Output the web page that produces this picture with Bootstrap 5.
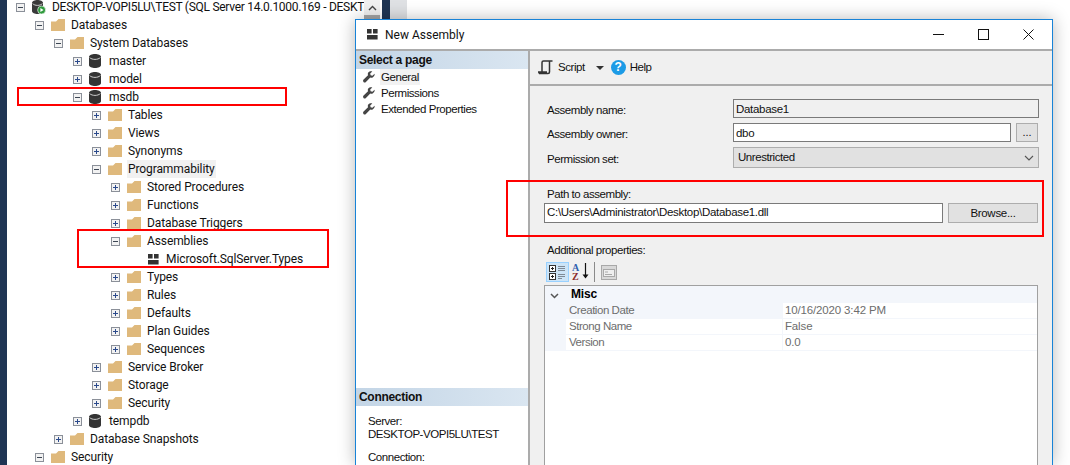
<!DOCTYPE html>
<html lang="en">
<head>
<meta charset="utf-8">
<title>New Assembly</title>
<link href="https://cdn.jsdelivr.net/npm/bootstrap@5.3.0/dist/css/bootstrap.min.css" rel="stylesheet">
<style>
html,body{height:465px;overflow:hidden;background:#fff}
body{font-family:Roboto,sans-serif;color:#111;position:relative}
.navy-edge{width:7px;background:#1f3554}
.obj-tree{width:357px;height:467px;margin-top:-2px;font-size:12px;letter-spacing:-.1px;list-style:none;padding:0;margin-bottom:0;white-space:nowrap;overflow:hidden}
.tnode{height:18px;display:flex;align-items:center;line-height:18px}
.tnode .exp{width:9px;height:9px;margin-right:7px;flex:none}
.tnode .ico{width:14px;height:14px;margin-right:6px;flex:none}
.lv0{padding-left:9px;letter-spacing:-.28px}.lv1{padding-left:28px}.lv2{padding-left:47px}.lv3{padding-left:66px}.lv4{padding-left:85px}.lv5{padding-left:104px}
.leaf{padding-left:141px}
.leaf .ico{width:11px;height:11px;margin-right:7px}
.hilite{background:#f1f1f1;padding:0 1px;margin-left:-1px}
.sb-col{width:16px;background:#f0f0f0;color:#444}
.sb-btn{height:15px}
.sb-thumb{height:60px;background:#a6a6a6}
.navy-col{width:8px;background:#1f3554;margin-left:2px}
.pale-col{width:17px;background:#dfe1e4}
.redbox{position:absolute;border:2px solid #f00;z-index:5;pointer-events:none}
.rb1{left:17px;top:87px;width:270px;height:19px}
.rb2{left:77px;top:229px;width:252px;height:39px}
.rb3{left:506px;top:180px;width:538px;height:57px}
.dlg{position:absolute;left:355px;top:19px;width:698px;height:446px;background:#fff;border:1px solid #1883d7;border-bottom:0;box-shadow:0 0 16px rgba(0,0,0,.28);z-index:3;font-family:"Liberation Sans",sans-serif;font-size:11.5px;letter-spacing:-.45px;color:#111}
.dlg-title{height:31px;border-bottom:2px solid #ababab;padding-left:11px;padding-right:1px}
.dlg-title .ttl{font-family:Roboto,sans-serif;font-size:12px;margin-left:7px;padding-top:1px;letter-spacing:0}
.winbtn{width:45px;height:14px}
.dlg-body{min-height:0}
.pane-l{width:174px;border-right:2px solid #ababab;background:#fff}
.pane-hd{height:18px;line-height:18px;background:linear-gradient(90deg,#c3d5e6,#dae6f1);font-size:12px;font-weight:700;padding-left:3px;letter-spacing:-.3px}
.page-item{height:16px;padding-left:7px;line-height:16px}
.page-item svg{width:12px;height:12px;margin-right:6px;flex:none}
.page-item .on{background:#f2f2f2;padding:0 1px;margin-left:-1px}
.conn{padding:9px 0 1px 12px;line-height:13px}
.conn-gap{margin-top:10px}
.pane-r{background:#f0f0f0;min-width:0}
.tbar{height:35px;border-bottom:2px solid #ababab;padding-left:8px}
.scr-lbl{margin-left:5px}
.scr-caret{margin-left:11px;margin-right:7px}
.help-dot{width:15px;height:15px;background:#1c9be6;font-size:12px;line-height:15px;letter-spacing:0}
.help-lbl{margin-left:4px}
.form-area{padding:13px 13px 0 14px;min-height:0}
.frow{display:flex;align-items:center;margin-bottom:5px}
.frow label{width:189px;padding:3px 0 0 3px;margin:0;line-height:14px}
.frow.mb-0 label{padding-top:2px}
.fld{height:19px;line-height:17px;border:1px solid #7a7a7a;padding:0 2px;background:#fff;border-radius:0;font-size:11.5px;letter-spacing:-.3px;color:#111;box-shadow:none}
.fld.ro{background:#f0f0f0;height:19px;flex:1}
.fld.w{flex:1}
.dots{width:22px;height:19px;border:1px solid #adadad;background:#e1e1e1;margin-left:5px;margin-right:1px;padding:0;border-radius:0;font-size:11px;line-height:13px;color:#111}
.combo{height:21px;flex:1;border:1px solid #adadad;background:#e1e1e1;padding:0 4px;line-height:19px}
.seclbl{padding-left:3px;height:14px;line-height:14px}
.sec-a{margin-top:19px}
.sec-b{margin-top:20px}
.path-row{margin:2px 0 0}
.path-row .fld{height:20px;line-height:17px;padding-bottom:2px;flex:1}
.browse{width:90px;height:20px;border:1px solid #adadad;background:#e1e1e1;margin-left:5px;margin-right:1px;padding:0;border-radius:0;font-size:11.5px;letter-spacing:-.3px;line-height:18px;color:#111}
.grid-tb{height:22px;margin-top:4px;padding-left:2px;flex:none}
.gt-on{width:23px;height:20px;background:#cce4f7;border:1px solid #99d1ff}
.gt-az{width:19px;height:20px;margin-left:3px;position:relative}
.az-a,.az-z{position:absolute;left:0;font:700 10px/9px "Liberation Serif",serif;letter-spacing:0}
.az-a{top:1px;color:#2f5fae}.az-z{top:10px;color:#8b2a2a}
.az-arrow{position:absolute;left:9px;top:0}
.gt-sep{width:1px;height:20px;background:#8a8a8a;margin-left:3px}
.gt-off{margin-left:6px}
.prop{margin-top:2px;border:1px solid #a0a0a0;border-bottom:0;background:#fff;margin-right:1px;color:#6d6d6d;font-size:11.5px;min-height:0}
.prop-row{height:16px;line-height:15px}
.prop-hd{height:17px;background:#f3f6fb;color:#000;font-size:12px;font-weight:700;line-height:19px;letter-spacing:-.2px}
.prop-hd svg{margin:2px 12px 0 5px}
.gut{width:21px;background:#f3f6fb;flex:none}
.pk{width:217px;flex:none;padding-left:3px;border-bottom:1px solid #f3f6fb;border-right:1px solid #f3f6fb}
.pv{flex:1;padding-left:2px;border-bottom:1px solid #f3f6fb;letter-spacing:-.15px}
.pk.sel{background:#f3f6fb}
</style>
</head>
<body class="d-flex">
<svg width="0" height="0" class="position-absolute">
<symbol id="minus" viewBox="0 0 9 9"><rect x=".5" y=".5" width="8" height="8" fill="#f2f2f2" stroke="#8b9099"/><path d="M2 4.500h5" stroke="#3c4654"/></symbol>
<symbol id="plus" viewBox="0 0 9 9"><rect x=".5" y=".5" width="8" height="8" fill="#f2f2f2" stroke="#8b9099"/><path d="M2 4.500h5M4.500 2v5" stroke="#2b4a8c"/></symbol>
<symbol id="folder" viewBox="0 0 14 14"><path d="M0 3.500h5L7.500 1H14v12H0z" fill="#dfb97c"/></symbol>
<symbol id="db" viewBox="0 0 14 14"><path d="M0 3c0-4 12-4 12 0v8c0 4-12 4-12 0z" fill="#343434"/><path d="M.6 3.600c2.600 2.400 8.200 2.400 10.800 0" fill="none" stroke="#ddd" stroke-width=".9"/></symbol>
<symbol id="server" viewBox="0 0 14 14"><path d="M0 3c0-4 11-4 11 0v8c0 4-11 4-11 0z" fill="#3a3a3a"/><path d="M.6 3.600c2.400 2.400 7.400 2.400 9.800 0" fill="none" stroke="#ddd" stroke-width=".9"/><circle cx="9.600" cy="10" r="4" fill="#2f9a3c" stroke="#fff" stroke-width=".6"/><path d="M8.400 8v4l3.200-2z" fill="#fff"/></symbol>
<symbol id="asm" viewBox="0 0 11 11"><path d="M0 0h4.600v4.600H0zM6 0h4.600v4.600H6zM0 6h10.600v4.400H0z" fill="#333"/></symbol>
<symbol id="wrench" viewBox="0 0 12 12"><path d="M11.600 2.700 9.400 4.700 7.600 4.200 7.200 2.500 9.300.4C7.600-.2 5.600.4 5 2c-.3.800-.2 1.500 0 2.200L.6 8.500c-.7.700-.7 1.700-.1 2.400.7.700 1.700.7 2.400 0l4.400-4.400c.8.300 1.600.3 2.300 0 1.500-.7 2.300-2.200 2-3.800z" fill="#454545"/></symbol>
</svg>

<div class="navy-edge flex-shrink-0"></div>
<ul class="obj-tree flex-shrink-0">
<li class="tnode lv0"><svg class="exp"><use href="#minus"/></svg><svg class="ico"><use href="#server"/></svg><span>DESKTOP-VOPI5LU\TEST (SQL Server 14.0.1000.169 - DESKT</span></li>
<li class="tnode lv1"><svg class="exp"><use href="#minus"/></svg><svg class="ico"><use href="#folder"/></svg><span>Databases</span></li>
<li class="tnode lv2"><svg class="exp"><use href="#minus"/></svg><svg class="ico"><use href="#folder"/></svg><span>System Databases</span></li>
<li class="tnode lv3"><svg class="exp"><use href="#plus"/></svg><svg class="ico"><use href="#db"/></svg><span>master</span></li>
<li class="tnode lv3"><svg class="exp"><use href="#plus"/></svg><svg class="ico"><use href="#db"/></svg><span>model</span></li>
<li class="tnode lv3"><svg class="exp"><use href="#minus"/></svg><svg class="ico"><use href="#db"/></svg><span>msdb</span></li>
<li class="tnode lv4"><svg class="exp"><use href="#plus"/></svg><svg class="ico"><use href="#folder"/></svg><span>Tables</span></li>
<li class="tnode lv4"><svg class="exp"><use href="#plus"/></svg><svg class="ico"><use href="#folder"/></svg><span>Views</span></li>
<li class="tnode lv4"><svg class="exp"><use href="#plus"/></svg><svg class="ico"><use href="#folder"/></svg><span>Synonyms</span></li>
<li class="tnode lv4"><svg class="exp"><use href="#minus"/></svg><svg class="ico"><use href="#folder"/></svg><span class="hilite">Programmability</span></li>
<li class="tnode lv5"><svg class="exp"><use href="#plus"/></svg><svg class="ico"><use href="#folder"/></svg><span>Stored Procedures</span></li>
<li class="tnode lv5"><svg class="exp"><use href="#plus"/></svg><svg class="ico"><use href="#folder"/></svg><span>Functions</span></li>
<li class="tnode lv5"><svg class="exp"><use href="#plus"/></svg><svg class="ico"><use href="#folder"/></svg><span>Database Triggers</span></li>
<li class="tnode lv5"><svg class="exp"><use href="#minus"/></svg><svg class="ico"><use href="#folder"/></svg><span>Assemblies</span></li>
<li class="tnode leaf"><svg class="ico"><use href="#asm"/></svg><span>Microsoft.SqlServer.Types</span></li>
<li class="tnode lv5"><svg class="exp"><use href="#plus"/></svg><svg class="ico"><use href="#folder"/></svg><span>Types</span></li>
<li class="tnode lv5"><svg class="exp"><use href="#plus"/></svg><svg class="ico"><use href="#folder"/></svg><span>Rules</span></li>
<li class="tnode lv5"><svg class="exp"><use href="#plus"/></svg><svg class="ico"><use href="#folder"/></svg><span>Defaults</span></li>
<li class="tnode lv5"><svg class="exp"><use href="#plus"/></svg><svg class="ico"><use href="#folder"/></svg><span>Plan Guides</span></li>
<li class="tnode lv5"><svg class="exp"><use href="#plus"/></svg><svg class="ico"><use href="#folder"/></svg><span>Sequences</span></li>
<li class="tnode lv4"><svg class="exp"><use href="#plus"/></svg><svg class="ico"><use href="#folder"/></svg><span>Service Broker</span></li>
<li class="tnode lv4"><svg class="exp"><use href="#plus"/></svg><svg class="ico"><use href="#folder"/></svg><span>Storage</span></li>
<li class="tnode lv4"><svg class="exp"><use href="#plus"/></svg><svg class="ico"><use href="#folder"/></svg><span>Security</span></li>
<li class="tnode lv3"><svg class="exp"><use href="#plus"/></svg><svg class="ico"><use href="#db"/></svg><span>tempdb</span></li>
<li class="tnode lv2"><svg class="exp"><use href="#plus"/></svg><svg class="ico"><use href="#folder"/></svg><span>Database Snapshots</span></li>
<li class="tnode lv1"><svg class="exp"><use href="#minus"/></svg><svg class="ico"><use href="#folder"/></svg><span>Security</span></li>
</ul>
<div class="sb-col flex-shrink-0">
  <div class="sb-btn d-flex align-items-center justify-content-center"><svg width="9" height="6" viewBox="0 0 9 6"><path d="M1 5l3.500-3.500L8 5" fill="none" stroke="#444" stroke-width="1.400"/></svg></div>
  <div class="sb-thumb"></div>
</div>
<div class="navy-col flex-shrink-0"></div>
<div class="pale-col flex-shrink-0"></div>

<div class="redbox rb1"></div>
<div class="redbox rb2"></div>
<div class="redbox rb3"></div>

<div class="dlg d-flex flex-column">
  <div class="dlg-title d-flex align-items-center flex-shrink-0">
    <svg width="11" height="11" viewBox="0 0 11 11"><use href="#asm"/></svg>
    <span class="ttl flex-grow-1">New Assembly</span>
    <div class="winbtn d-flex align-items-center justify-content-center"><svg width="11" height="11" viewBox="0 0 11 11"><path d="M0 5.500h11" stroke="#111"/></svg></div>
    <div class="winbtn d-flex align-items-center justify-content-center"><svg width="11" height="11" viewBox="0 0 11 11"><rect x=".5" y=".5" width="10" height="10" fill="none" stroke="#111"/></svg></div>
    <div class="winbtn d-flex align-items-center justify-content-center"><svg width="11" height="11" viewBox="0 0 11 11"><path d="M.5.500l10 10M10.500.500l-10 10" stroke="#111"/></svg></div>
  </div>
  <div class="dlg-body d-flex flex-grow-1">
    <div class="pane-l d-flex flex-column flex-shrink-0">
      <div class="pane-hd">Select a page</div>
      <div class="page-item d-flex align-items-center"><svg><use href="#wrench"/></svg><span class="on">General</span></div>
      <div class="page-item d-flex align-items-center"><svg><use href="#wrench"/></svg><span>Permissions</span></div>
      <div class="page-item d-flex align-items-center"><svg><use href="#wrench"/></svg><span>Extended Properties</span></div>
      <div class="flex-grow-1"></div>
      <div class="pane-hd">Connection</div>
      <div class="conn"><div>Server:</div><div>DESKTOP-VOPI5LU\TEST</div><div class="conn-gap">Connection:</div></div>
    </div>
    <div class="pane-r flex-grow-1 d-flex flex-column">
      <div class="tbar d-flex align-items-center flex-shrink-0">
        <svg width="15" height="15" viewBox="0 0 15 15"><path d="M4 12V2.500C4 1.500 4.500 1 5.500 1H14.500M11.500 1.500V12c0 1.200-.8 1.500-1.500 1.500H1.500L.5 12H9" fill="none" stroke="#333" stroke-width="1.500"/></svg>
        <span class="scr-lbl">Script</span>
        <svg class="scr-caret" width="8" height="4" viewBox="0 0 8 4"><path d="M0 0h8L4 4z" fill="#333"/></svg>
        <span class="help-dot d-inline-flex align-items-center justify-content-center rounded-circle text-white fw-bold">?</span>
        <span class="help-lbl">Help</span>
      </div>
      <div class="form-area flex-grow-1 d-flex flex-column">
        <div class="frow"><label>Assembly name:</label><input class="fld ro form-control" value="Database1" readonly></div>
        <div class="frow"><label>Assembly owner:</label><input class="fld w form-control" value="dbo"><button class="dots btn">...</button></div>
        <div class="frow mb-0"><label>Permission set:</label><div class="combo d-flex align-items-center justify-content-between"><span>Unrestricted</span><svg width="10" height="6" viewBox="0 0 10 6"><path d="M1 1l4 4 4-4" fill="none" stroke="#555" stroke-width="1.100"/></svg></div></div>
        <div class="seclbl sec-a">Path to assembly:</div>
        <div class="frow path-row mb-0"><input class="fld form-control" value="C:\Users\Administrator\Desktop\Database1.dll"><button class="browse btn">Browse...</button></div>
        <div class="seclbl sec-b">Additional properties:</div>
        <div class="grid-tb d-flex align-items-center">
          <div class="gt-on d-flex align-items-center justify-content-center"><svg width="17" height="15" viewBox="0 0 17 15"><rect x=".5" y=".5" width="6" height="6" fill="#fff" stroke="#333"/><rect x=".5" y="8.500" width="6" height="6" fill="#fff" stroke="#333"/><path d="M2 3.500h3M3.500 2v3M2 11.500h3M3.500 10v3" stroke="#222"/><path d="M9 1.500h7M9 3.500h7M9 5.500h7M9 9.500h7M9 11.500h7M9 13.500h4" stroke="#7f8a96"/></svg></div>
          <div class="gt-az"><span class="az-a">A</span><span class="az-z">Z</span><svg class="az-arrow" width="9" height="19" viewBox="0 0 9 19"><path d="M4.500 1v13" stroke="#111" stroke-width="1.200"/><path d="M1.500 12.500h6l-3 4z" fill="#111"/></svg></div>
          <div class="gt-sep"></div>
          <svg class="gt-off" width="16" height="15" viewBox="0 0 16 15"><rect x=".5" y=".5" width="15" height="14" fill="#d8d8d8" stroke="#a8a8a8"/><rect x="2.500" y="4.500" width="11" height="7" fill="#eee" stroke="#a8a8a8"/><path d="M4 7h3M4 9.500h7" stroke="#a8a8a8"/></svg>
        </div>
        <div class="prop flex-grow-1">
          <div class="prop-hd d-flex align-items-center"><svg width="9" height="6" viewBox="0 0 9 6"><path d="M1 1l3.500 3.500L8 1" fill="none" stroke="#555" stroke-width="1.500"/></svg><span>Misc</span></div>
          <div class="prop-row d-flex"><div class="gut"></div><div class="pk sel">Creation Date</div><div class="pv">10/16/2020 3:42 PM</div></div>
          <div class="prop-row d-flex"><div class="gut"></div><div class="pk">Strong Name</div><div class="pv">False</div></div>
          <div class="prop-row d-flex"><div class="gut"></div><div class="pk">Version</div><div class="pv">0.0</div></div>
        </div>
      </div>
    </div>
  </div>
</div>
<script src="https://cdn.jsdelivr.net/npm/bootstrap@5.3.0/dist/js/bootstrap.bundle.min.js"></script>
</body>
</html>
